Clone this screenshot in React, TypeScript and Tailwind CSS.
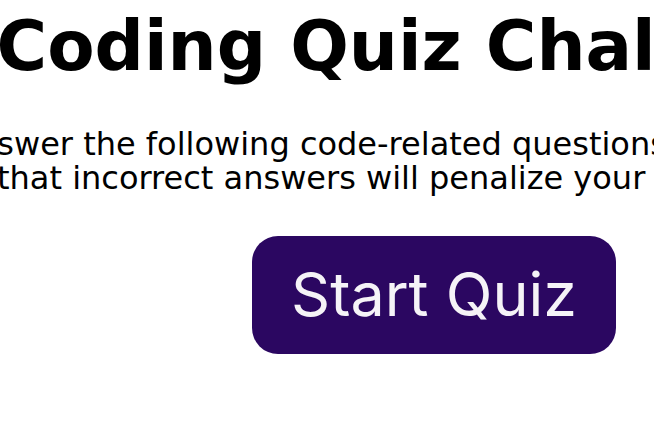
import React from 'react'

export default function App() {
  return (
    <div className="h-[426px] w-full overflow-hidden bg-white font-['DejaVu_Sans',sans-serif] text-black">
      {/* content column is centred at x=434, wider than the window */}
      <div className="flex w-[868px] flex-col items-center text-center">
        <h1 className="mt-[12px] whitespace-nowrap text-[69px] font-bold leading-none">
          Coding Quiz Challenge
        </h1>
        <p className="mt-[46px] whitespace-nowrap text-[32px] leading-[34px]">
          Try to answer the following code-related questions within the time limit.
          <br />
          Keep in mind that incorrect answers will penalize your score/time by ten seconds!
        </p>
        <button className="mt-[41px] flex h-[118px] w-[364px] items-center justify-center rounded-[26px] bg-[#2b0761] font-['Inter',sans-serif] text-[61px] text-[#f5f3f7]">
          Start Quiz
        </button>
      </div>
    </div>
  )
}
